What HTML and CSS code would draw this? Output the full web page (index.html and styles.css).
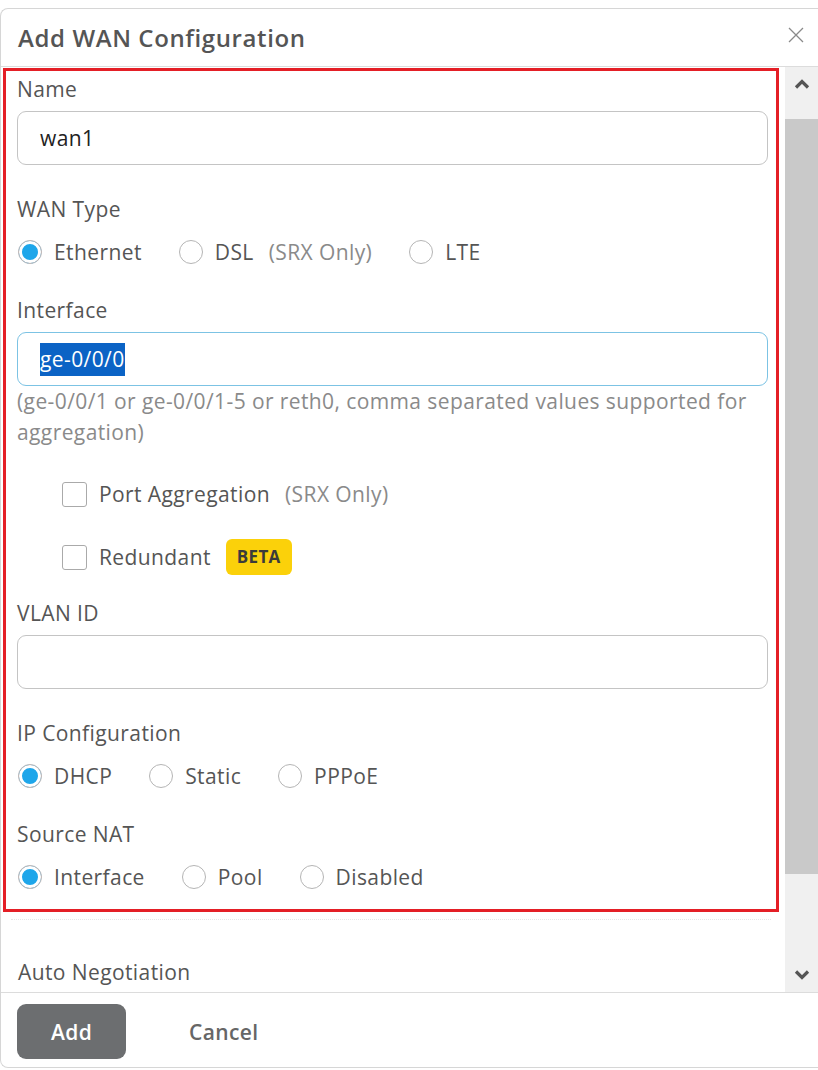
FILE: index.html
```html
<!DOCTYPE html>
<html lang="en">

<head>
  <meta charset="UTF-8">
  <meta name="viewport" content="width=device-width, initial-scale=1.0">
  <title>Add WAN Configuration</title>
  <link rel="stylesheet" href="styles.css">
</head>

<body>
  <div class="modal">
    <div class="modal-header">
      <h2>Add WAN Configuration</h2>
      <button class="close" aria-label="Close">
        <svg width="16" height="16" viewBox="0 0 16 16"><path d="M1 1L15 15M15 1L1 15" stroke="#8a8a8a" stroke-width="1.3" fill="none"/></svg>
      </button>
    </div>

    <div class="modal-body">
      <div class="scroll-content">
        <div class="highlight">
          <label class="field-label">Name</label>
          <div class="input">wan1</div>

          <label class="field-label gap">WAN Type</label>
          <div class="radio-row">
            <span class="radio checked"></span><span class="opt">Ethernet</span>
            <span class="radio"></span><span class="opt">DSL</span><span class="note">(SRX Only)</span>
            <span class="radio"></span><span class="opt">LTE</span>
          </div>

          <label class="field-label gap">Interface</label>
          <div class="input focus"><span class="selected">ge-0/0/0</span></div>
          <p class="help">(ge-0/0/1 or ge-0/0/1-5 or reth0, comma separated values supported for aggregation)</p>

          <div class="check-row first">
            <span class="checkbox"></span><span class="opt">Port Aggregation</span><span class="note">(SRX Only)</span>
          </div>
          <div class="check-row">
            <span class="checkbox"></span><span class="opt">Redundant</span><span class="badge">BETA</span>
          </div>

          <label class="field-label vlan">VLAN ID</label>
          <div class="input"></div>

          <label class="field-label gap">IP Configuration</label>
          <div class="radio-row">
            <span class="radio checked"></span><span class="opt">DHCP</span>
            <span class="radio"></span><span class="opt">Static</span>
            <span class="radio"></span><span class="opt">PPPoE</span>
          </div>

          <label class="field-label gap">Source NAT</label>
          <div class="radio-row">
            <span class="radio checked"></span><span class="opt">Interface</span>
            <span class="radio"></span><span class="opt">Pool</span>
            <span class="radio"></span><span class="opt">Disabled</span>
          </div>
        </div>

        <div class="divider"></div>
        <label class="field-label auto">Auto Negotiation</label>
      </div>

      <div class="scrollbar">
        <svg class="arrow" width="16" height="12" viewBox="0 0 16 12"><path d="M2 9.5L8 3.5L14 9.5" stroke="#555" stroke-width="3.2" fill="none"/></svg>
        <div class="track"><div class="thumb"></div></div>
        <svg class="arrow" width="16" height="12" viewBox="0 0 16 12"><path d="M2 2.5L8 8.5L14 2.5" stroke="#555" stroke-width="3.2" fill="none"/></svg>
      </div>
    </div>

    <div class="modal-footer">
      <button class="btn-primary">Add</button>
      <button class="btn-link">Cancel</button>
    </div>
  </div>
</body>

</html>
```

FILE: styles.css
```css
html,
body {
  margin: 0;
  padding: 0;
  overflow: hidden;
  background: #fff;
}

body {
  color: #555;
  font-family: 'Open Sans', 'Noto Sans', Arial, sans-serif;
  font-size: 21px;
  letter-spacing: 0.4px;
}

.modal {
  margin-top: 8px;
  height: 1060px;
  border: 1px solid #d6d6d6;
  border-right: none;
  border-radius: 8px 0 0 8px;
  display: flex;
  flex-direction: column;
  box-sizing: border-box;
}

.modal-header {
  flex: none;
  height: 57px;
  display: flex;
  align-items: center;
  justify-content: space-between;
  padding: 0 14px 0 17px;
  border-bottom: 1px solid #dcdcdc;
}

.modal-header h2 {
  margin: 0;
  font-size: 24px;
  font-weight: 600;
  letter-spacing: 0.6px;
  color: #555;
}

.close {
  background: none;
  border: none;
  padding: 0;
  margin-top: -6px;
  width: 16px;
  height: 16px;
}

.modal-body {
  flex: none;
  height: 925px;
  display: flex;
  overflow: hidden;
  border-bottom: 1px solid #dcdcdc;
}

.scroll-content {
  flex: 1;
  padding: 1px 6px 0 2px;
}

.highlight {
  border: 3px solid #e41f26;
  padding: 4px 8px 18px 11px;
}

.field-label {
  display: block;
  line-height: 28px;
  height: 28px;
}

.field-label.gap {
  margin-top: 30px;
}

.field-label.vlan {
  margin-top: 24px;
}

.input {
  margin-top: 8px;
  height: 54px;
  box-sizing: border-box;
  border: 1px solid #c4c4c4;
  border-radius: 9px;
  padding: 0 22px;
  display: flex;
  align-items: center;
  color: #222;
}

.input.focus {
  border-color: #7cc3e4;
}

.selected {
  background: #0b63c5;
  color: #fff;
  line-height: 33px;
}

.help {
  margin: 0;
  line-height: 31px;
  color: #8a8a8a;
}

.radio-row {
  margin-top: 15px;
  height: 28px;
  display: flex;
  align-items: center;
}

.radio {
  width: 24px;
  height: 24px;
  box-sizing: border-box;
  border: 1px solid #b5b5b5;
  border-radius: 50%;
  margin: 0 12px 0 1px;
  flex: none;
}

.radio.checked {
  background: #1ea6ea;
  box-shadow: inset 0 0 0 3px #fff;
  border-color: #c9b9b4;
}

.opt {
  margin-right: 36px;
}

.note {
  color: #8a8a8a;
  margin-left: -21px;
  margin-right: 36px;
}

.check-row {
  margin-left: 45px;
  height: 36px;
  display: flex;
  align-items: center;
  margin-top: 27px;
}

.check-row.first {
  margin-top: 28px;
}

.checkbox {
  width: 25px;
  height: 25px;
  box-sizing: border-box;
  border: 1px solid #aaa;
  border-radius: 3px;
  margin-right: 12px;
  flex: none;
}

.check-row .opt {
  margin-right: 15px;
}

.check-row .note {
  margin-left: 0;
}

.badge {
  background: #fbd10a;
  color: #3b3b3b;
  font-size: 17px;
  font-weight: 700;
  letter-spacing: 0.3px;
  height: 36px;
  line-height: 36px;
  padding: 0 11px;
  border-radius: 6px;
}

.divider {
  margin: 7px 8px 0 8px;
  border-top: 1px dotted #e6e6e6;
}

.field-label.auto {
  margin-top: 38px;
  margin-left: 15px;
}

.scrollbar {
  width: 33px;
  background: #f0f0f0;
  display: flex;
  flex-direction: column;
  align-items: center;
}

.arrow {
  flex: none;
  margin: 11px 0;
}

.track {
  flex: 1;
  width: 100%;
  position: relative;
}

.thumb {
  position: absolute;
  top: 18px;
  left: 0;
  right: 0;
  height: 755px;
  background: #c9c9c9;
}

.modal-footer {
  flex: none;
  display: flex;
  align-items: center;
  padding: 11px 16px 8px;
}

.btn-primary {
  width: 109px;
  height: 55px;
  border: none;
  border-radius: 9px;
  background: #6c6e70;
  color: #fff;
  font-family: inherit;
  font-size: 21px;
  font-weight: 600;
  letter-spacing: 0.4px;
}

.btn-link {
  margin-left: 57px;
  background: none;
  border: none;
  font-family: inherit;
  font-size: 21px;
  font-weight: 600;
  letter-spacing: 0.4px;
  color: #666;
}
```
